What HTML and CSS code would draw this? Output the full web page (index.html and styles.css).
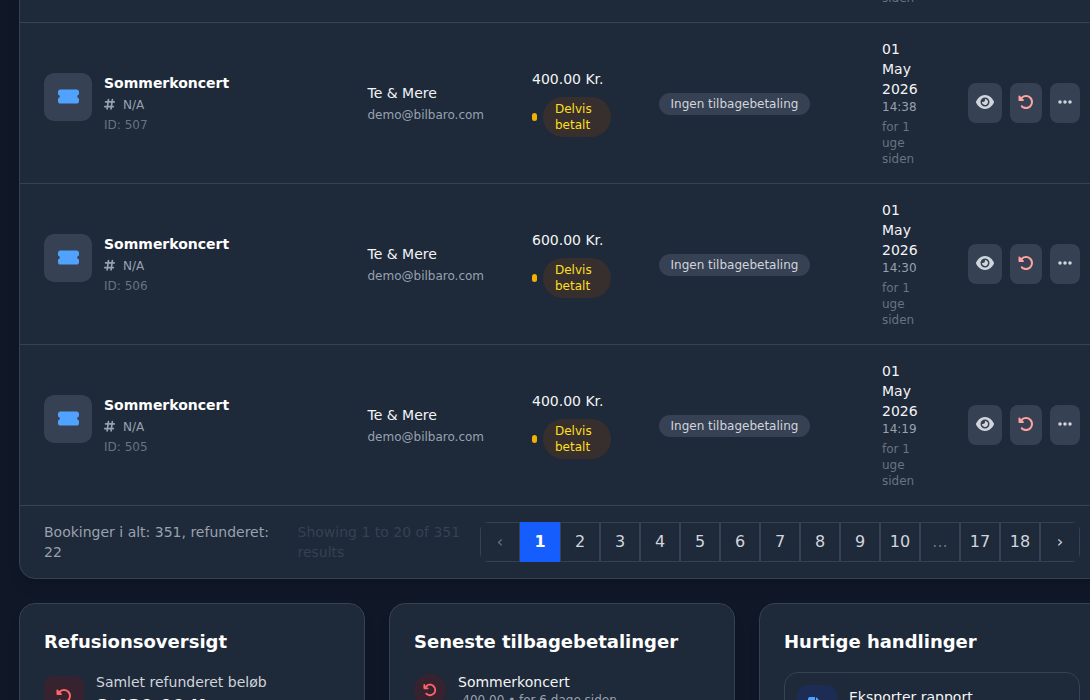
FILE: index.html
```html
<!DOCTYPE html>
<html lang="da">
<head>
    <meta charset="UTF-8">
    <meta name="viewport" content="width=device-width, initial-scale=1.0">
    <title>Tilbagebetalinger</title>
    <link rel="stylesheet" href="styles.css">
</head>
<body>
    <svg class="sprite">
        <symbol id="ticket" viewBox="0 0 576 512"><path d="M0 128C0 92.7 28.7 64 64 64H512c35.3 0 64 28.7 64 64v64c0 8.8-7.4 15.7-15.7 18.6C541.5 217.1 528 235 528 256s13.5 38.9 32.3 45.4c8.3 2.9 15.7 9.8 15.7 18.6v64c0 35.3-28.7 64-64 64H64c-35.3 0-64-28.7-64-64V320c0-8.8 7.4-15.7 15.7-18.6C34.5 294.9 48 277 48 256s-13.5-38.9-32.3-45.4C7.4 207.7 0 200.8 0 192V128z"/></symbol>
        <symbol id="hash" viewBox="0 0 448 512"><path fill="none" stroke="currentColor" stroke-width="68" stroke-linecap="round" d="M64 160H416M32 352H384M181 64L128 448M341 64L288 448"/></symbol>
        <symbol id="eye" viewBox="0 0 576 512"><path d="M288 32c-80.8 0-145.5 36.8-192.6 80.6C48.6 156 17.3 208 2.5 243.7c-3.3 7.9-3.3 16.7 0 24.6C17.3 304 48.6 356 95.4 399.4C142.5 443.2 207.2 480 288 480s145.5-36.8 192.6-80.6c46.8-43.5 78.1-95.4 93-131.1c3.3-7.9 3.3-16.7 0-24.6c-14.9-35.7-46.2-87.7-93-131.1C433.5 68.8 368.8 32 288 32zM144 256a144 144 0 1 1 288 0 144 144 0 1 1 -288 0zm144-64c0 35.3-28.7 64-64 64c-7.1 0-13.9-1.2-20.3-3.3c-5.5-1.8-11.9 1.6-11.7 7.4c.3 6.9 1.3 13.8 3.2 20.7c13.7 51.2 66.4 81.6 117.6 67.9s81.6-66.4 67.9-117.6c-11.1-41.5-47.8-69.4-88.6-71.1c-5.8-.2-9.2 6.1-7.4 11.7c2.1 6.4 3.3 13.2 3.3 20.3z"/></symbol>
        <symbol id="undo" viewBox="0 0 512 512"><path d="M125.7 160H176c17.7 0 32 14.3 32 32s-14.3 32-32 32H48c-17.7 0-32-14.3-32-32V64c0-17.7 14.3-32 32-32s32 14.3 32 32v51.2L97.6 97.6c87.5-87.5 229.3-87.5 316.8 0s87.5 229.3 0 316.8s-229.3 87.5-316.8 0c-12.5-12.5-12.5-32.8 0-45.3s32.8-12.5 45.3 0c62.5 62.5 163.8 62.5 226.3 0s62.5-163.8 0-226.3s-163.8-62.5-226.3 0L125.7 160z"/></symbol>
        <symbol id="rotate" viewBox="0 0 512 512"><path d="M48.5 224H40c-13.3 0-24-10.7-24-24V72c0-9.7 5.8-18.5 14.8-22.2s19.3-1.7 26.2 5.2L98.6 96.6c87.6-86.5 228.7-86.2 315.8 1c87.5 87.5 87.5 229.3 0 316.8s-229.3 87.5-316.8 0c-12.5-12.5-12.5-32.8 0-45.3s32.8-12.5 45.3 0c62.5 62.5 163.8 62.5 226.3 0s62.5-163.8 0-226.3c-62.2-62.2-162.7-62.5-225.3-1L185 183c6.9 6.9 8.9 17.2 5.2 26.2s-12.5 14.8-22.2 14.8H48.5z"/></symbol>
        <symbol id="dots" viewBox="0 0 448 512"><path d="M8 256a56 56 0 1 1 112 0A56 56 0 1 1 8 256zm160 0a56 56 0 1 1 112 0 56 56 0 1 1 -112 0zm216-56a56 56 0 1 1 0 112 56 56 0 1 1 0-112z"/></symbol>
        <symbol id="export" viewBox="0 0 576 512"><path d="M0 64C0 28.7 28.7 0 64 0H224V128c0 17.7 14.3 32 32 32H384V288H216c-13.3 0-24 10.7-24 24s10.7 24 24 24H384V448c0 35.3-28.7 64-64 64H64c-35.3 0-64-28.7-64-64V64zM384 128H256V0L384 128zM384 336V288H494L455 249l34-34 80 80c9 9 9 25 0 34l-80 80-34-34 39-39H384z"/></symbol>
    </svg>

    <div class="container">
        <div class="card list">
            <table>
                <colgroup>
                    <col class="col-event">
                    <col class="col-customer">
                    <col class="col-amount">
                    <col class="col-refund">
                    <col class="col-date">
                    <col class="col-actions">
                </colgroup>
                <tbody id="booking-table"></tbody>
            </table>
            <div class="list-footer">
                <div class="summary">Bookinger i alt: 351, refunderet: 22</div>
                <div class="showing">Showing 1 to 20 of 351 results</div>
                <div class="pagination">
                    <span class="muted">‹</span>
                    <span class="active">1</span>
                    <span>2</span>
                    <span>3</span>
                    <span>4</span>
                    <span>5</span>
                    <span>6</span>
                    <span>7</span>
                    <span>8</span>
                    <span>9</span>
                    <span>10</span>
                    <span class="muted">...</span>
                    <span>17</span>
                    <span>18</span>
                    <span>›</span>
                </div>
            </div>
        </div>

        <div class="panels">
            <div class="card panel">
                <h3>Refusionsoversigt</h3>
                <div class="stat">
                    <div class="tile red"><svg class="icon"><use href="#rotate"/></svg></div>
                    <div>
                        <div class="label">Samlet refunderet beløb</div>
                        <div class="value">8,430.00 Kr.</div>
                    </div>
                </div>
            </div>
            <div class="card panel">
                <h3>Seneste tilbagebetalinger</h3>
                <div class="stat">
                    <div class="tile red round"><svg class="icon small"><use href="#undo"/></svg></div>
                    <div>
                        <div class="name">Sommerkoncert</div>
                        <div class="detail">-400.00 • for 6 dage siden</div>
                    </div>
                </div>
            </div>
            <div class="card panel">
                <h3>Hurtige handlinger</h3>
                <div class="stat action">
                    <div class="tile blue"><svg class="icon wide"><use href="#export"/></svg></div>
                    <div>
                        <div class="name">Eksporter rapport</div>
                        <div class="detail">Download CSV</div>
                    </div>
                </div>
            </div>
        </div>
    </div>

    <script>
        const bookings = [
            { id: 508, amount: '400.00', time: '14:41' },
            { id: 507, amount: '400.00', time: '14:38' },
            { id: 506, amount: '600.00', time: '14:30' },
            { id: 505, amount: '400.00', time: '14:19' }
        ];

        const tableBody = document.getElementById('booking-table');

        bookings.forEach(function (booking) {
            const row = document.createElement('tr');
            row.innerHTML = `
                <td>
                    <div class="event">
                        <div class="thumb"><svg class="icon"><use href="#ticket"/></svg></div>
                        <div>
                            <div class="title">Sommerkoncert</div>
                            <div class="ref"><svg class="icon"><use href="#hash"/></svg>N/A</div>
                            <div class="id">ID: ${booking.id}</div>
                        </div>
                    </div>
                </td>
                <td>
                    <div class="name">Te &amp; Mere</div>
                    <div class="email">demo@bilbaro.com</div>
                </td>
                <td>
                    <div class="name">${booking.amount} Kr.</div>
                    <div class="status"><span class="dot"></span><span class="pill">Delvis betalt</span></div>
                </td>
                <td><div class="badge">Ingen tilbagebetaling</div></td>
                <td>
                    <div class="name">01 May 2026</div>
                    <div class="time">${booking.time}</div>
                    <div class="ago">for 1 uge siden</div>
                </td>
                <td>
                    <div class="actions">
                        <button><svg class="icon wide"><use href="#eye"/></svg></button>
                        <button class="refund"><svg class="icon"><use href="#rotate"/></svg></button>
                        <button><svg class="icon narrow"><use href="#dots"/></svg></button>
                    </div>
                </td>
            `;
            tableBody.appendChild(row);
        });
    </script>
</body>
</html>
```

FILE: styles.css
```css
* {
    box-sizing: border-box;
}
html, body {
    height: 700px;
    overflow: hidden;
}
body {
    font-family: "DejaVu Sans", sans-serif;
    font-size: 14px;
    line-height: 20px;
    margin: 0;
    background-color: #101828;
    color: #f3f4f6;
}
.sprite {
    display: none;
}
.container {
    width: 1086px;
    margin: -139px 0 0 19px;
}
.card {
    background: #1e2939;
    border: 1px solid #364153;
    border-radius: 16px;
    box-shadow: 0 10px 15px -3px rgba(0, 0, 0, 0.1), 0 4px 6px -4px rgba(0, 0, 0, 0.1);
}
.icon {
    display: block;
    width: 16px;
    height: 16px;
    fill: currentColor;
}
.icon.wide {
    width: 18px;
}
.icon.narrow {
    width: 14px;
}
.icon.small {
    width: 14px;
    height: 14px;
}

/* table */
table {
    width: 1084px;
    table-layout: fixed;
    border-collapse: separate;
    border-spacing: 0;
}
.col-event { width: 323.5px; }
.col-customer { width: 164.5px; }
.col-amount { width: 127px; }
.col-refund { width: 223px; }
.col-date { width: 86px; }
.col-actions { width: 160px; }
td {
    padding: 16px 24px;
    height: 161px;
    border-bottom: 1px solid #364153;
    vertical-align: middle;
}
.event {
    display: flex;
    gap: 12px;
}
.thumb {
    display: flex;
    align-items: center;
    justify-content: center;
    width: 48px;
    height: 48px;
    border-radius: 10px;
    background: #364153;
    color: #51a2ff;
}
.thumb .icon {
    width: 21px;
    height: 19px;
    margin-bottom: 2px;
}
.title {
    font-weight: bold;
    color: #fff;
}
.ref, .id, .email, .time, .ago {
    font-size: 12px;
    line-height: 16px;
    color: #99a1af;
}
.ref, .id, .email, .ago {
    margin-top: 4px;
}
.id, .ago {
    color: #6a7282;
}
.ref {
    display: flex;
    gap: 8px;
}
.ref .icon {
    width: 11px;
    height: 12.5px;
    margin-top: 1px;
}
.status {
    display: flex;
    align-items: center;
    gap: 6px;
    margin-top: 8px;
}
.dot {
    flex: none;
    width: 5px;
    height: 8px;
    border-radius: 3px;
    background: #f0b100;
}
.pill {
    width: 68px;
    padding: 4px 12px;
    border-radius: 20px;
    background: #372f2d;
    color: #ffdf20;
    font-size: 12px;
    line-height: 16px;
}
.badge {
    width: 151px;
    margin-top: 2px;
    padding: 3px 11.5px;
    border-radius: 11px;
    background: #364153;
    color: #d1d5dc;
    font-size: 12px;
    line-height: 16px;
    white-space: nowrap;
}
.actions {
    display: flex;
    gap: 8px;
}
button {
    display: flex;
    height: 40px;
    padding: 11px 8px;
    border: 0;
    border-radius: 8px;
    background: #364153;
    color: #d1d5dc;
}
button.refund {
    color: #ffa2a2;
}

/* footer */
.list-footer {
    display: flex;
    height: 72px;
    padding: 16px 24px;
}
.summary {
    width: 253.5px;
    padding-right: 20px;
    color: #99a1af;
}
.showing {
    width: 182.5px;
    color: #364153;
}
.pagination {
    display: flex;
    width: 600px;
    height: 40px;
    border-radius: 8px;
    overflow: hidden;
    font-size: 16px;
}
.pagination span {
    width: 40px;
    border: 1px solid #364153;
    line-height: 38px;
    text-align: center;
    color: #d1d5dc;
}
.pagination .muted {
    color: #6a7282;
}
.pagination .active {
    background: #155dfc;
    border-color: #155dfc;
    color: #fff;
    font-weight: bold;
}

/* panels */
.panels {
    display: grid;
    grid-template-columns: repeat(3, 1fr);
    gap: 24px;
    margin-top: 24px;
}
.panel {
    padding: 24px;
}
h3 {
    margin: 0 0 16px;
    font-size: 18px;
    line-height: 28px;
    color: #fff;
}
.stat {
    display: flex;
    align-items: center;
    gap: 12px;
}
.action {
    padding: 12px;
    border: 1px solid #364153;
    border-radius: 14px;
}
.tile {
    display: flex;
    align-items: center;
    justify-content: center;
    width: 40px;
    height: 40px;
    border-radius: 10px;
}
.tile.round {
    width: 32px;
    height: 32px;
    border-radius: 50%;
}
.tile.red {
    background: #36232f;
    color: #ff6467;
}
.tile.blue {
    background: #1d2c54;
    color: #51a2ff;
}
.label {
    color: #d1d5dc;
}
.value {
    font-size: 18px;
    line-height: 28px;
    font-weight: bold;
    color: #fff;
}
.detail {
    font-size: 12px;
    line-height: 16px;
    color: #99a1af;
}
```
